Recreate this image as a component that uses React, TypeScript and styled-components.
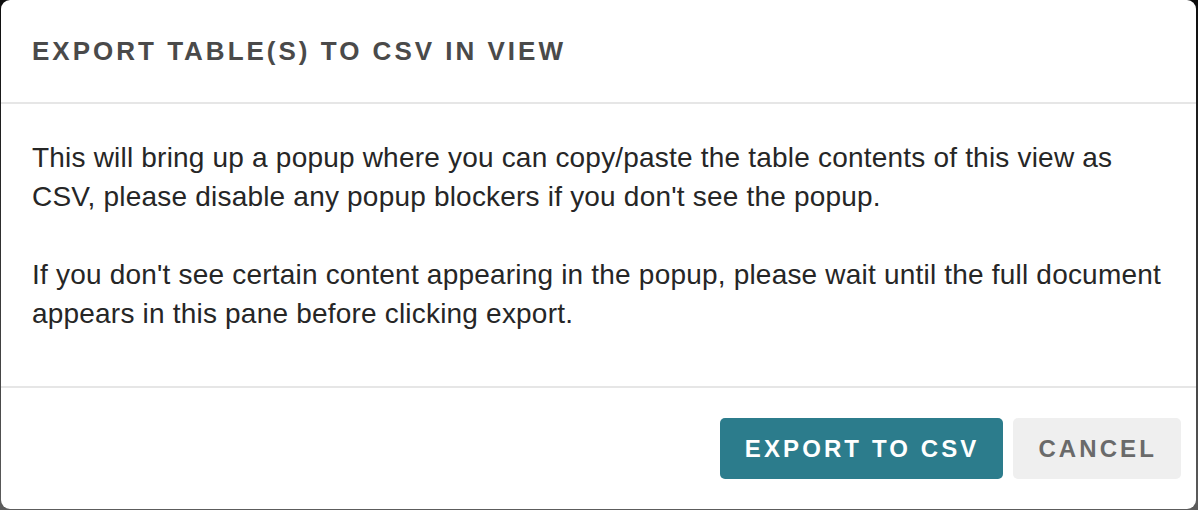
import React from "react";
import styled, { createGlobalStyle } from "styled-components";

const Global = createGlobalStyle`
  html, body { margin: 0; padding: 0; }
  body {
    width: 1198px;
    height: 510px;
    overflow: hidden;
    background: linear-gradient(to bottom, #0d0d0d 0%, #2a2a2a 40%, #5c5c5c 100%);
    font-family: "Liberation Sans", Arial, sans-serif;
  }
`;

const Backdrop = styled.div`
  display: flex;
  padding: 0 1px 0 1px;
  height: 510px;
  box-sizing: border-box;
`;

const Modal = styled.div`
  width: 1195px;
  height: 509px;
  background: #fff;
  border-radius: 9px;
  display: flex;
  flex-direction: column;
  overflow: hidden;
`;

const Header = styled.div`
  height: 104px;
  box-sizing: border-box;
  border-bottom: 2px solid #e6e6e6;
  display: flex;
  align-items: center;
  padding: 0 31px;
`;

const Title = styled.h2`
  margin: 0;
  font-size: 26px;
  font-weight: 700;
  letter-spacing: 3px;
  color: #4a4a4a;
  text-transform: uppercase;
`;

const Body = styled.div`
  padding: 34px 31px 0;
  height: 284px;
  box-sizing: border-box;
  border-bottom: 2px solid #e6e6e6;
`;

const Para = styled.p`
  margin: 0 0 39px;
  font-size: 28px;
  line-height: 39px;
  letter-spacing: 0.2px;
  color: #262626;
`;

const Footer = styled.div`
  display: flex;
  justify-content: flex-end;
  gap: 10px;
  padding: 30px 15px 0;
`;

const Button = styled.button<{ $primary?: boolean }>`
  height: 61px;
  border: none;
  border-radius: 5px;
  padding: 0 24px 0 25px;
  font-family: "Liberation Sans", Arial, sans-serif;
  font-size: 24px;
  font-weight: 700;
  letter-spacing: 3.1px;
  text-transform: uppercase;
  background: ${(p) => (p.$primary ? "#2c7c8c" : "#efefef")};
  color: ${(p) => (p.$primary ? "#ffffff" : "#6a6a6a")};
  cursor: pointer;
`;

export default function App() {
  return (
    <>
      <Global />
      <Backdrop>
        <Modal>
          <Header>
            <Title>Export Table(s) to CSV in View</Title>
          </Header>
          <Body>
            <Para>
              This will bring up a popup where you can copy/paste the table contents of this view as
              CSV, please disable any popup blockers if you don't see the popup.
            </Para>
            <Para>
              If you don't see certain content appearing in the popup, please wait until the full document
              appears in this pane before clicking export.
            </Para>
          </Body>
          <Footer>
            <Button $primary>Export to CSV</Button>
            <Button>Cancel</Button>
          </Footer>
        </Modal>
      </Backdrop>
    </>
  );
}
